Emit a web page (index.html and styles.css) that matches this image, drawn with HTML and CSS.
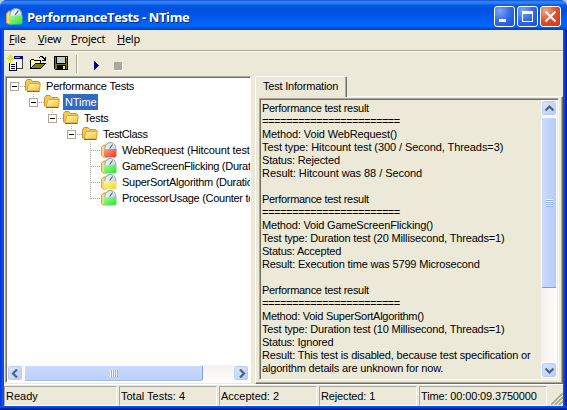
FILE: index.html
```html
<!DOCTYPE html>
<html lang="en">
<head>
<meta charset="utf-8">
<title>PerformanceTests - NTime</title>
<link rel="stylesheet" href="styles.css">
</head>
<body>
<svg class="defs" width="0" height="0">
  <defs>
    <linearGradient id="gold" x1="0" y1="0" x2="1" y2="1"><stop offset="0" stop-color="#fff6b0"/><stop offset="1" stop-color="#f3c23f"/></linearGradient>
    <linearGradient id="dome" x1="0" y1="0" x2="1" y2="1"><stop offset="0" stop-color="#a9bcc4"/><stop offset=".45" stop-color="#f3f8fa"/><stop offset="1" stop-color="#a9bfca"/></linearGradient>
    <linearGradient id="red" x1="0" y1="0" x2="1" y2="1"><stop offset="0" stop-color="#ff9c86"/><stop offset="1" stop-color="#e03a2c"/></linearGradient>
    <linearGradient id="green" x1="0" y1="0" x2="1" y2="1"><stop offset="0" stop-color="#a0ff92"/><stop offset="1" stop-color="#2fdc38"/></linearGradient>
    <linearGradient id="yellow" x1="0" y1="0" x2="1" y2="1"><stop offset="0" stop-color="#fff6a4"/><stop offset="1" stop-color="#f3d62c"/></linearGradient>
    <symbol id="folder" viewBox="0 0 16 16">
      <path d="M.5 12V3.500L2 1.500h4l1.500 2h6l1 1V12z" fill="#f3c954" stroke="#cc9426"/>
      <path d="M3.500 6.500l1-1h10.800l-1 7.500H2z" fill="url(#gold)" stroke="#d9a52c"/>
      <path d="M2 13.500h12.500" stroke="#8d641b"/>
    </symbol>
    <symbol id="scale" viewBox="0 0 16 16">
      <path d="M.5 13.500V5.500l2-2.500h3v12H2z" fill="#f9dc7c" stroke="#d8a136"/>
      <path d="M3.800 9V5.500C4 2.500 6.500.5 9.200.5s5.500 2 5.500 5V9z" fill="url(#dome)" stroke="#8fa5af"/>
      <path d="M8.500 6.500l3.200-4" stroke="#4a6272" stroke-width="1.200"/>
    </symbol>
  </defs>
</svg>
<div class="window">
  <header class="titlebar">
    <svg class="appicon" width="17" height="17" viewBox="0 0 16 16"><use href="#scale"/><path d="M3 7h12.500v7l-1.500 1.500H4.500L3 14z" fill="url(#green)"/></svg>
    <h1>PerformanceTests - NTime</h1>
    <div class="controls">
      <span class="ctl"><svg width="19" height="19"><path d="M4 12h7v3H4z" fill="#fff"/></svg></span>
      <span class="ctl"><svg width="19" height="19"><path d="M4 4h11v11H4zM5 7v7h9V7z" fill="#fff" fill-rule="evenodd"/></svg></span>
      <span class="ctl close"><svg width="19" height="19"><path d="M4.500 4.500l10 10M14.500 4.500l-10 10" stroke="#fff" stroke-width="2.200"/></svg></span>
    </div>
  </header>
  <nav class="menu"><span class="m1"><u>F</u>ile</span><span class="m2"><u>V</u>iew</span><span class="m3"><u>P</u>roject</span><span class="m4"><u>H</u>elp</span></nav>
  <div class="toolbar">
    <svg class="tb-new" width="17" height="17" shape-rendering="crispEdges">
      <path d="M7 1h9v12H7z" fill="#f4f4f4"/><path d="M7 1h9v3H7z" fill="#00007f"/><path d="M8 2h5v1H8z" fill="#8ea4df"/><path d="M15 4h1v10H9v-1h6z" fill="#444"/>
      <path d="M3 6h6v10H3z" fill="#fff"/><path d="M2 8h1v8H2zM3 15h7v1H3zM9 7h1v8H9zM4 9h4v1H4zM4 11h4v1H4zM4 13h4v1H4z" fill="#00003c"/>
      <path d="M3 0h1v8H3zM0 3h7v1H0zM1 1h1v1H1zM5 1h1v1H5zM2 2h3v3H2zM1 5h1v1H1zM5 5h1v1H5z" fill="#e0d820"/><path d="M3 3h1v1H3z" fill="#fff"/>
    </svg>
    <svg class="tb-open" width="17" height="16" shape-rendering="crispEdges">
      <path d="M0 14V5h1V4h3v1h7v3h5v1h-1v1h-1v1h-1v1h-1v1h-1v1z" fill="#000"/><path d="M1 5h3v1h6v2H5v1H4v1H3v1H2v1H1z" fill="#ffff9c"/><path d="M5 9h9v1h-1v1h-1v1h-1v1H2v-1h1v-1h1v-1h1z" fill="#848000"/>
      <path d="M9 2h1V1h3v1h1v1h1V2h1v4h-4V5h2V4h-1V3h-1V2h-2v1H9z" fill="#000"/>
    </svg>
    <svg class="tb-save" width="14" height="14" shape-rendering="crispEdges">
      <path d="M0 0h14v14H1l-1-1z" fill="#000"/><path d="M1 1h12v12H1z" fill="#777611"/><path d="M3 1h8v6H3z" fill="#c8c8c8"/><path d="M2 1h1v6h8V1h1v7H2zM3 9h9v4H3z" fill="#000"/><path d="M9 10h2v3H9zM12 1h1v1h-1z" fill="#e3e3e3"/>
    </svg>
    <i class="tb-sep"></i>
    <svg class="tb-play" width="6" height="9" shape-rendering="crispEdges"><path d="M0 0h1v1h1v1h1v1h1v1h1v1H4v1H3v1H2v1H1v1H0z" fill="#00008a"/></svg>
    <i class="tb-stop"></i>
  </div>
  <main class="workspace">
    <section class="treepane">
      <ul class="tree">
        <li class="l0"><i class="box"></i><i class="dots"></i><svg class="ic"><use href="#folder"/></svg><span class="t0">Performance Tests</span></li>
        <li class="l1"><i class="box"></i><i class="dots"></i><svg class="ic"><use href="#folder"/></svg><span class="selected">NTime</span></li>
        <li class="l2"><i class="box"></i><i class="dots"></i><svg class="ic"><use href="#folder"/></svg><span>Tests</span></li>
        <li class="l3"><i class="box"></i><i class="dots"></i><svg class="ic"><use href="#folder"/></svg><span class="t3">TestClass</span></li>
        <li class="leaf"><i class="dots"></i><svg class="ic" viewBox="0 0 16 16"><use href="#scale"/><path d="M3 7h12.500v7l-1.500 1.500H4.500L3 14z" fill="url(#red)"/></svg><span class="t4">WebRequest (Hitcount test</span></li>
        <li class="leaf"><i class="dots"></i><svg class="ic" viewBox="0 0 16 16"><use href="#scale"/><path d="M3 7h12.500v7l-1.500 1.500H4.500L3 14z" fill="url(#green)"/></svg><span class="t5">GameScreenFlicking (Durat</span></li>
        <li class="leaf"><i class="dots"></i><svg class="ic" viewBox="0 0 16 16"><use href="#scale"/><path d="M3 7h12.500v7l-1.500 1.500H4.500L3 14z" fill="url(#yellow)"/></svg><span class="t6">SuperSortAlgorithm (Duratio</span></li>
        <li class="leaf last"><i class="dots"></i><svg class="ic" viewBox="0 0 16 16"><use href="#scale"/><path d="M3 7h12.500v7l-1.500 1.500H4.500L3 14z" fill="url(#green)"/></svg><span class="t7">ProcessorUsage (Counter te</span></li>
      </ul>
      <div class="hscroll">
        <span class="sbtn"><svg width="9" height="9"><path d="M6 0.500L2 4.500l4 4" /></svg></span>
        <span class="hthumb"><i></i></span>
        <span class="sbtn end"><svg width="9" height="9"><path d="M3 0.500l4 4-4 4"/></svg></span>
      </div>
    </section>
    <section class="tabs">
      <div class="tab"><span>Test Information</span></div>
      <div class="page">
        <div class="textbox">
          <div class="report">
            <p class="r-head">Performance test result</p>
            <p class="r-eq">=======================</p>
            <p class="r-m1">Method: Void WebRequest()</p>
            <p class="r-t1">Test type: Hitcount test (300 / Second, Threads=3)</p>
            <p class="r-s1">Status: Rejected</p>
            <p class="r-r1">Result: Hitcount was 88 / Second</p>
            <p>&nbsp;</p>
            <p class="r-head">Performance test result</p>
            <p class="r-eq">=======================</p>
            <p class="r-m2">Method: Void GameScreenFlicking()</p>
            <p class="r-t2">Test type: Duration test (20 Millisecond, Threads=1)</p>
            <p class="r-s2">Status: Accepted</p>
            <p class="r-r2">Result: Execution time was 5799 Microsecond</p>
            <p>&nbsp;</p>
            <p class="r-head">Performance test result</p>
            <p class="r-eq">=======================</p>
            <p class="r-m3">Method: Void SuperSortAlgorithm()</p>
            <p class="r-t2">Test type: Duration test (10 Millisecond, Threads=1)</p>
            <p class="r-s3">Status: Ignored</p>
            <p class="r-r3">Result: This test is disabled, because test specification or</p>
            <p class="r-r3">algorithm details are unknown for now.</p>
          </div>
          <div class="vscroll">
            <span class="sbtn"><svg width="9" height="9"><path d="M0.500 6.500l4-4 4 4"/></svg></span>
            <span class="vthumb"><i></i></span>
            <span class="sbtn end"><svg width="9" height="9"><path d="M0.500 2.500l4 4 4-4"/></svg></span>
          </div>
        </div>
      </div>
    </section>
  </main>
  <footer class="status">
    <span class="s-ready">Ready</span><span class="s-total">Total Tests: 4</span><span class="s-acc">Accepted: 2</span><span class="s-rej">Rejected: 1</span><span class="s-time">Time: 00:00:09.3750000</span>
    <svg class="grip" width="12" height="12"><path d="M0 12L12 0M4 12l8-8M8 12l4-4" stroke="#aaa68f" stroke-width="1.800"/><path d="M2 12L12 2M6 12l6-6M10 12l2-2" stroke="#fff" stroke-width=".8"/></svg>
  </footer>
  <div class="frame-bottom"></div>
</div>
</body>
</html>
```

FILE: styles.css
```css
* { box-sizing: border-box; }
body { margin: 0; width: 567px; height: 410px; overflow: hidden; background: #b9c4d8; font: 11px/13px "Liberation Sans", Arial, sans-serif; color: #000; }
.defs { position: absolute; }
svg { display: block; flex: none; }
i { display: block; flex: none; }
.window { width: 567px; height: 410px; padding: 0 4px; border-radius: 7px 7px 0 0; overflow: hidden; background: linear-gradient(90deg, #0831d9 0, #0831d9 1px, #0855ea 2px, #0855ea 3px, #0144d8 4px, #0144d8 563px, #0855ea 563px, #003ddc 565px, #001ea0 566px); display: flex; flex-direction: column; }
.frame-bottom { height: 4px; flex: none; margin: 0 -4px; background: linear-gradient(#0855ea 0 1px, #0441d8 1px 2px, #0029b4 2px 3px, #00138c 3px 4px); }
.titlebar { height: 30px; margin: 0 -4px; padding: 0 6px; display: flex; flex: none; align-items: center; background: linear-gradient(#0842c4 0, #2b7df5 1px, #2f83f8 3px, #0a5ce6 5px, #0050e0 8px, #0054e4 14px, #0062f8 22px, #0065fd 26px, #0054df 28px, #003fc4 30px); }
.appicon { margin-top: 2px; }
.titlebar h1 { margin: 3px 0 0 4px; font: bold 13px/18px "Open Sans", "Noto Sans", sans-serif; color: #fff; text-shadow: 1px 1px #0a246a; white-space: nowrap; flex: 1; letter-spacing: -.38px; }
.controls { display: flex; gap: 2px; margin-top: 3px; }
.ctl { width: 21px; height: 21px; border: 1px solid #fff; border-radius: 3px; background: radial-gradient(circle at 25% 20%, #7da7f5, #3569e6 50%, #1b4fd5); }
.close { background: radial-gradient(circle at 25% 20%, #f2a58c, #de4f2b 50%, #c73a12); }
.menu { height: 22px; background: #ece9d8; flex: none; display: flex; padding: 2px 5px; border-bottom: 1px solid #fff; box-shadow: inset 0 -1px #aca899; font: 11px/13px "Noto Sans", sans-serif; letter-spacing: -.25px; }
.menu u { text-underline-offset: 1px; }
.m1 { width: 29px; } .m2 { width: 33px; } .m3 { width: 46px; }
.toolbar { height: 24px; flex: none; background: #ece9d8; display: flex; align-items: flex-start; padding: 3px 0 0 3px; }
.tb-open { margin-left: 6px; }
.tb-save { margin: 1px 0 0 7px; }
.tb-sep { margin-left: 8px; width: 2px; height: 18px; background: #aca899; border-right: 1px solid #fff; }
.tb-play { margin: 6px 0 0 16px; }
.tb-stop { margin: 7px 0 0 14px; width: 9px; height: 9px; background: #aca899; border: solid #fff; border-width: 0 1px 1px 0; }
.workspace { flex: 1; min-height: 0; background: #ece9d8; display: flex; padding-left: 1px; }
.treepane { width: 246px; height: 307px; border: 1px solid #aca899; border-color: #aca899 #fff #fff #aca899; box-shadow: inset 1px 1px #716f64; background: #fff; padding: 1px 0 0 1px; display: flex; flex-direction: column; }
.tree { list-style: none; margin: 0; padding: 0; flex: 1; overflow: hidden; }
.tree li { height: 16px; display: flex; align-items: center; white-space: nowrap; }
.l0 { padding-left: 3px; } .l1 { padding-left: 22px; } .l2 { padding-left: 41px; } .l3 { padding-left: 60px; }
.box { width: 9px; height: 9px; border: 1px solid #aca899; background: linear-gradient(#000, #000) center / 5px 1px no-repeat #fff; }
.dots { width: 6px; height: 1px; background: repeating-linear-gradient(90deg, transparent 0 1px, #aca899 1px 2px); }
.ic { width: 16px; height: 16px; }
.tree span { margin-left: 3px; height: 16px; line-height: 16px; padding: 0 2px; letter-spacing: -.2px; }
.tree .selected { background: #316ac5; color: #fff; width: 35px; letter-spacing: -.1px; }
.tree .t3 { letter-spacing: -.35px; }
.tree .t4, .tree .t5, .tree .t6, .tree .t7 { padding-right: 0; }
.tree .t4 { letter-spacing: -.14px; }
.tree .t5, .tree .t6, .tree .t7 { letter-spacing: -.28px; }
.tree li.l1, .tree li.l2, .tree li.l3 { background-repeat: no-repeat; background-image: repeating-linear-gradient(#aca899 0 1px, transparent 1px 2px); background-size: 1px 4px; }
.tree li.l1 { background-position: 26px 0; } .tree li.l2 { background-position: 45px 0; } .tree li.l3 { background-position: 64px 0; }
.tree .leaf { padding-left: 83px; background: repeating-linear-gradient(#aca899 0 1px, transparent 1px 2px) 83px 0 / 1px 16px no-repeat; }
.tree .last { background-size: 1px 9px; }
.leaf .dots { width: 11px; }
.hscroll { height: 17px; display: flex; background: linear-gradient(#f3f1ec, #fefefb); margin-right: 1px; flex: none; }
.sbtn { width: 16px; height: 16px; border: 1px solid #fff; border-radius: 3px; background: linear-gradient(135deg, #dce7ff, #b7cbf8); box-shadow: inset 0 0 0 1px #b8cbf6; display: flex; align-items: center; justify-content: center; flex: none; }
.sbtn path { fill: none; stroke: #4d6185; stroke-width: 2.200; }
.hthumb { width: 179px; height: 16px; margin-left: 1px; background: linear-gradient(#cbdafe, #bdd0fb); border: 1px solid #fff; border-right-color: #7ba0d5; border-bottom-color: #a5bde8; border-radius: 2px; display: flex; align-items: center; justify-content: center; }
.hthumb i { width: 8px; height: 7px; background: repeating-linear-gradient(90deg, #eef4fe 0 1px, #8fb0f0 1px 2px); }
.end { margin-left: auto; }
.tabs { margin-left: 4px; width: 308px; height: 308px; display: flex; flex-direction: column; }
.tab { width: 92px; height: 21px; flex: none; border: 1px solid #fff; border-right-color: #716f64; border-bottom: 0; border-radius: 2px 2px 0 0; box-shadow: inset -1px 0 #aca899; padding: 3px 0 0 7px; position: relative; z-index: 1; background: #ece9d8; white-space: nowrap; letter-spacing: -.2px; }
.page { flex: 1; min-height: 0; margin-top: -1px; border: 1px solid #fff; border-color: #fff #716f64 #716f64 #fff; box-shadow: inset -1px -1px #aca899; padding: 1px 3px 3px 3px; }
.textbox { height: 100%; border: 1px solid #aca899; border-color: #aca899 #fff #fff #aca899; box-shadow: inset 1px 1px #716f64; padding: 1px 1px 1px 2px; display: flex; }
.report { flex: 1; padding: 2px 0 0 0; white-space: nowrap; }
.report p { margin: 0; height: 13px; letter-spacing: -.17px; }
.report .r-head { letter-spacing: -.3px; }
.report .r-eq { letter-spacing: -.43px; }
.report .r-m1 { letter-spacing: -.12px; }
.report .r-m3 { letter-spacing: -.26px; }
.report .r-t1 { letter-spacing: -.08px; }
.report .r-s1 { letter-spacing: -.18px; }
.report .r-r1 { letter-spacing: -.06px; }
.report .r-s2 { letter-spacing: -.1px; }
.report .r-s2 { letter-spacing: -.1px; }
.vscroll { width: 16px; background: linear-gradient(90deg, #f3f1ec, #fefefb); display: flex; flex-direction: column; flex: none; }
.report .r-s2 { letter-spacing: -.1px; }
.report .r-s2 { letter-spacing: -.1px; }
.report .r-s2, .report .r-s3 { letter-spacing: -.22px; }
.vscroll .end { margin: auto 0 0; }
.vthumb { height: 171px; margin-top: 1px; border: 1px solid #fff; border-bottom-color: #7ba0d5; border-radius: 2px; background: linear-gradient(90deg, #cbdafe, #b8ccfa); display: flex; align-items: center; justify-content: center; }
.vthumb i { width: 7px; height: 8px; background: repeating-linear-gradient(#eef4fe 0 1px, #8fb0f0 1px 2px); }
.status { height: 22px; flex: none; background: #ece9d8; display: flex; gap: 2px; padding: 1px 0 0 0; border-top: 1px solid #fff; }
.status span { border: 1px solid #aca899; border-color: #aca899 #fff #fff #aca899; height: 20px; padding: 3px 0 0 1px; white-space: nowrap; }
.s-ready { width: 113px; } .s-total, .s-acc, .s-rej { width: 98px; } .s-time { width: 128px; }
.status .s-rej, .status .s-time { letter-spacing: -.14px; }
.grip { margin: 7px 0 0 2px; }
```
